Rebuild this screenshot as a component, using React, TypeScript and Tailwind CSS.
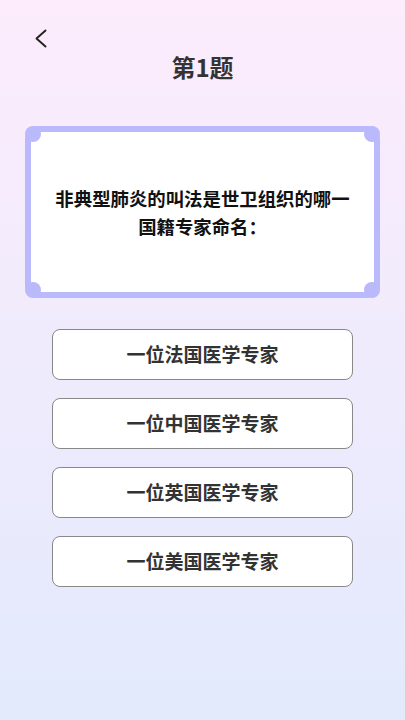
const options = ['一位法国医学专家', '一位中国医学专家', '一位英国医学专家', '一位美国医学专家'];

export default function App() {
  return (
    <div
      className="min-h-[720px] w-full bg-gradient-to-b from-[#fcecfc] to-[#e2eafc] flex flex-col"
      style={{ fontFamily: '"Noto Sans CJK SC", "Noto Sans", sans-serif' }}
    >
      {/* Header */}
      <div className="h-[30px] pt-[29px] pl-[34px] box-content">
        <svg width="14" height="20" viewBox="0 0 14 20" fill="none" stroke="#222" strokeWidth={1.9} strokeLinecap="round" strokeLinejoin="round">
          <path d="M11.5 1.5 2.5 9.5l9 8" />
        </svg>
      </div>
      <h1 className="text-center text-[24px] font-bold text-[#333] leading-[32px] mt-[-8px]">第1题</h1>

      {/* Question card */}
      <div className="mx-[25px] mt-[43px] rounded-[13px] bg-[#b9b9fb] p-[6px]">
        <div className="relative bg-white h-[160px] flex items-center justify-center px-[22px]">
          <span className="absolute -left-[6px] -top-[6px] w-[16px] h-[16px] rounded-full bg-[#b9b9fb]" />
          <span className="absolute -right-[6px] -top-[6px] w-[16px] h-[16px] rounded-full bg-[#b9b9fb]" />
          <span className="absolute -left-[6px] -bottom-[6px] w-[16px] h-[16px] rounded-full bg-[#b9b9fb]" />
          <span className="absolute -right-[6px] -bottom-[6px] w-[16px] h-[16px] rounded-full bg-[#b9b9fb]" />
          <p className="text-center text-[18.4px] font-bold text-[#111] leading-[28px]">
            非典型肺炎的叫法是世卫组织的哪一国籍专家命名：
          </p>
        </div>
      </div>

      {/* Options */}
      <div className="flex flex-col gap-[18px] mt-[31px] px-[52px]">
        {options.map((o) => (
          <button
            key={o}
            type="button"
            className="h-[51px] w-full rounded-[8px] border border-[#888] bg-white text-[19px] font-semibold text-[#333]"
          >
            {o}
          </button>
        ))}
      </div>
    </div>
  );
}
